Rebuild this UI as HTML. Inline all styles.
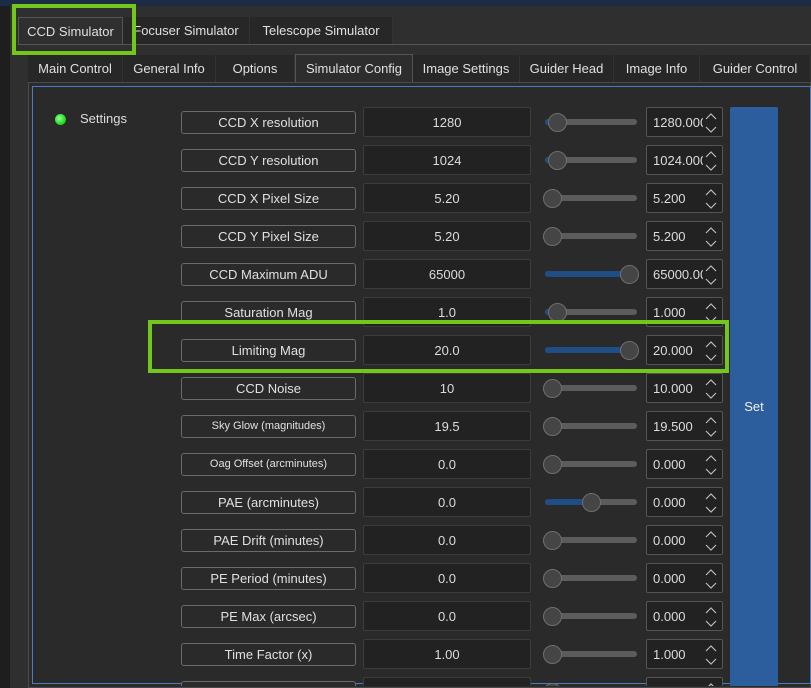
<!DOCTYPE html><html><head><meta charset="utf-8"><style>
*{box-sizing:border-box;margin:0;padding:0}
html,body{width:811px;height:688px;overflow:hidden}
body{background:#2d2d2d;font-family:"Liberation Sans","DejaVu Sans",sans-serif;color:#dcdcdc;position:relative}
.a{position:absolute}
.tab{position:absolute;font-size:13px;line-height:27px;text-align:center;color:#e0e0e0;border-right:1px solid #333}
.lbl{position:absolute;left:181px;width:175px;height:23px;border:1px solid #6a6a6a;border-radius:3px;text-align:center;font-size:13px;line-height:21px;color:#e0e0e0;background:#2a2a2a}
.val{position:absolute;left:363px;width:168px;height:30px;border:1px solid #3c3c3c;border-radius:2px;background:#222;text-align:center;font-size:13px;line-height:30px}
.trk{position:absolute;left:545px;width:92px;height:6px;border-radius:3px;background:#5c5c5c}
.fil{position:absolute;left:545px;height:6px;border-radius:3px;background:#1f4e86}
.hdl{position:absolute;width:19px;height:19px;border-radius:50%;background:#454545;border:1px solid #6f6f6f}
.spn{position:absolute;left:646px;width:77px;height:30px;border:1px solid #555;border-radius:2px;background:#222;font-size:13px;line-height:30px;padding-left:6px;overflow:hidden}
.spn span{display:block;width:50px;overflow:hidden;white-space:nowrap}
.spn svg{position:absolute;right:4px;top:4px}
#clip{position:absolute;left:0;top:0;width:811px;height:686px;overflow:hidden}
</style></head><body>
<div class="a" style="left:0;top:0;width:811px;height:6px;background:#1c2c44"></div>
<div class="a" style="left:0;top:6px;width:10px;height:682px;background:#1e1e1e"></div>
<div class="a" style="left:10px;top:6px;width:801px;height:682px;background:#2f2f2f"></div>
<div class="a" style="left:18px;top:17px;width:375px;height:28px;background:#272727"></div>
<div class="tab" style="left:18px;top:17px;width:105px;height:28px;background:#2f2f2f;border:1px solid #555;border-bottom:none">CCD Simulator</div>
<div class="tab" style="left:123px;top:17px;width:127px">Focuser Simulator</div>
<div class="tab" style="left:250px;top:17px;width:143px">Telescope Simulator</div>
<div class="a" style="left:18px;top:44px;width:793px;height:1px;background:#555"></div>
<div class="a" style="left:28px;top:55px;width:783px;height:27px;background:#272727"></div>
<div class="tab" style="left:28px;top:55px;width:95px">Main Control</div>
<div class="tab" style="left:123px;top:55px;width:93px">General Info</div>
<div class="tab" style="left:216px;top:55px;width:79px">Options</div>
<div class="tab" style="left:295px;top:54px;width:118px;height:29px;background:#2d2d2d;border:1px solid #555;border-bottom:none">Simulator Config</div>
<div class="tab" style="left:413px;top:55px;width:107px">Image Settings</div>
<div class="tab" style="left:520px;top:55px;width:94px">Guider Head</div>
<div class="tab" style="left:614px;top:55px;width:86px">Image Info</div>
<div class="tab" style="left:700px;top:55px;width:111px">Guider Control</div>
<div class="a" style="left:28px;top:82px;width:783px;height:606px;border:1px solid #4a4a4a;background:#2b2b2b"></div>
<div class="a" style="left:32px;top:86px;width:779px;height:598px;border:1px solid #4a7cbf;background:#2a2a2a"></div>
<div class="a" style="left:55px;top:114px;width:11px;height:11px;border-radius:50%;background:radial-gradient(circle at 40% 40%,#9f9,#2d2 60%,#1a1)"></div>
<div class="a" style="left:80px;top:111px;font-size:13px">Settings</div>
<div id="clip">
<div class="a" style="left:730px;top:107px;width:48px;height:590px;background:#2c5e9e;border-radius:2px;text-align:center;font-size:13px;line-height:600px;color:#f0f0f0">Set</div>
<div id="rows"></div>
</div>
<div class="a" style="left:12px;top:4px;width:124px;height:51px;border:4px solid #72c61c"></div>
<div class="a" style="left:148px;top:320px;width:581px;height:53px;border:4px solid #72c61c"></div>
<script>
var R=[["CCD X resolution","1280",557,"1280.000"],["CCD Y resolution","1024",557,"1024.000"],["CCD X Pixel Size","5.20",552,"5.200"],["CCD Y Pixel Size","5.20",552,"5.200"],["CCD Maximum ADU","65000",629,"65000.00"],["Saturation Mag","1.0",557,"1.000"],["Limiting Mag","20.0",629,"20.000"],["CCD Noise","10",552,"10.000"],["Sky Glow (magnitudes)","19.5",552,"19.500",1],["Oag Offset (arcminutes)","0.0",552,"0.000",1],["PAE (arcminutes)","0.0",591,"0.000"],["PAE Drift (minutes)","0.0",552,"0.000"],["PE Period (minutes)","0.0",552,"0.000"],["PE Max (arcsec)","0.0",552,"0.000"],["Time Factor (x)","1.00",552,"1.000"],["","",552,""]];
var h="";R.forEach(function(r,i){var c=122+38*i;
h+='<div class="lbl" style="top:'+(c-11)+'px;'+(r[4]?'font-size:11px':'')+'">'+r[0]+'</div>';
h+='<div class="val" style="top:'+(c-15)+'px">'+r[1]+'</div>';
h+='<div class="trk" style="top:'+(c-3)+'px"></div>';
if(r[2]>553)h+='<div class="fil" style="top:'+(c-3)+'px;width:'+(r[2]-545)+'px"></div>';
h+='<div class="hdl" style="left:'+(r[2]-9)+'px;top:'+(c-9)+'px"></div>';
h+='<div class="spn" style="top:'+(c-15)+'px"><span>'+r[3]+'</span><svg width="14" height="22" viewBox="0 0 14 22"><path d="M2 7 L7 2 L12 7 M2 15 L7 20 L12 15" stroke="#bbb" stroke-width="1.2" fill="none"/></svg></div>';});
document.getElementById("rows").innerHTML=h;
</script>
</body></html>
